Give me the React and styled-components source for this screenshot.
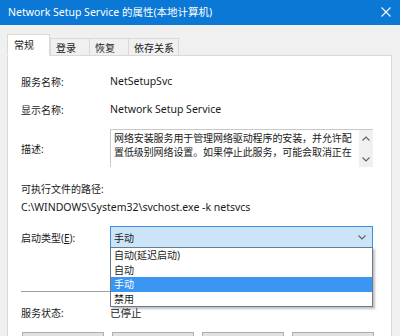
import React from 'react'
import styled, { createGlobalStyle } from 'styled-components'

const GlobalStyle = createGlobalStyle`
  html, body {
    margin: 0;
    padding: 0;
    background: #f0f0f0;
  }
  body {
    font-family: "Noto Sans", "Noto Sans CJK SC", sans-serif;
    font-size: 10px;
    color: #1a1a1a;
  }
`

const tabs = ['常规', '登录', '恢复', '依存关系']
const options = ['自动(延迟启动)', '自动', '手动', '禁用']

function Chevron({ up }) {
  return (
    <svg width="8" height="5" viewBox="0 0 8 5">
      <polyline
        points={up ? '0.5,4.5 4,1 7.5,4.5' : '0.5,0.5 4,4 7.5,0.5'}
        fill="none"
        stroke="#606060"
        strokeWidth="1.1"
      />
    </svg>
  )
}

export default function App() {
  return (
    <Window>
      <GlobalStyle />
      <TitleBar>
        <Title>Network Setup Service 的属性(本地计算机)</Title>
        <CloseIcon viewBox="0 0 10 10">
          <line x1="0.5" y1="0.5" x2="9.5" y2="9.5" stroke="#fff" strokeWidth="1.1" />
          <line x1="9.5" y1="0.5" x2="0.5" y2="9.5" stroke="#fff" strokeWidth="1.1" />
        </CloseIcon>
      </TitleBar>
      <Body>
        <TabStrip>
          {tabs.map((t, i) => (
            <Tab key={t} active={i === 0}>{t}</Tab>
          ))}
        </TabStrip>
        <Panel>
          <Row>
            <Label>服务名称:</Label>
            <Value>NetSetupSvc</Value>
          </Row>
          <Row gap={14}>
            <Label>显示名称:</Label>
            <Value>Network Setup Service</Value>
          </Row>
          <DescRow>
            <Label>描述:</Label>
            <DescBox>
              <DescText>
                网络安装服务用于管理网络驱动程序的安装，并允许配置低级别网络设置。如果停止此服务，可能会取消正在
              </DescText>
              <ScrollBar>
                <Chevron up />
                <Chevron />
              </ScrollBar>
            </DescBox>
          </DescRow>
          <PathLabel>可执行文件的路径:</PathLabel>
          <PathValue>C:\WINDOWS\System32\svchost.exe -k netsvcs</PathValue>
          <StartRow>
            <Label>启动类型(<u>E</u>):</Label>
            <ComboWrap>
              <Combo>
                <span>手动</span>
                <Chevron />
              </Combo>
              <DropList>
                {options.map((o) => (
                  <Option key={o} selected={o === '手动'}>{o}</Option>
                ))}
              </DropList>
            </ComboWrap>
          </StartRow>
          <Separator />
          <Row gap={13}>
            <Label>服务状态:</Label>
            <Value>已停止</Value>
          </Row>
          <Buttons>
            <Button />
            <Button />
            <Button />
            <Button />
          </Buttons>
        </Panel>
      </Body>
    </Window>
  )
}

const Window = styled.div`
  width: 400px;
  height: 336px;
  overflow: hidden;
  display: flex;
  flex-direction: column;
  background: #f0f0f0;
`

const TitleBar = styled.div`
  height: 25px;
  flex-shrink: 0;
  background: #0a78d4;
  display: flex;
  align-items: center;
  justify-content: space-between;
  padding: 0 9px 2px 8px;
  box-sizing: border-box;
`

const Title = styled.div`
  color: #fff;
  font-size: 10.5px;
  white-space: nowrap;
`

const CloseIcon = styled.svg`
  width: 10px;
  height: 10px;
`

const Body = styled.div`
  flex: 1;
  padding: 9px 8px 0 7px;
  display: flex;
  flex-direction: column;
`

const TabStrip = styled.div`
  display: flex;
  align-items: flex-end;
  height: 22px;
  position: relative;
  z-index: 1;
  margin-bottom: -1px;
`

const Tab = styled.div`
  box-sizing: border-box;
  height: ${(p) => (p.active ? '22px' : '18px')};
  min-width: ${(p) => (p.active ? '43px' : '40px')};
  padding: ${(p) => (p.active ? '0 6px 1px 6px' : '0 4px 0 5px')};
  margin-right: ${(p) => (p.active ? '0' : '-1px')};
  background: ${(p) => (p.active ? '#fff' : '#f0f0f0')};
  border: 1px solid #d9d9d9;
  border-bottom: ${(p) => (p.active ? '1px solid #fff' : '1px solid #d9d9d9')};
  font-size: 10px;
  display: flex;
  align-items: center;
`

const Panel = styled.div`
  flex: 1;
  background: #fff;
  border: 1px solid #d9d9d9;
  border-bottom: none;
  padding: 18px 18px 0 13px;
  display: flex;
  flex-direction: column;
`

const Row = styled.div`
  display: flex;
  align-items: center;
  height: 14px;
  margin-top: ${(p) => p.gap || 0}px;
`

const Label = styled.div`
  width: 89px;
  flex-shrink: 0;
  white-space: nowrap;
  u {
    text-decoration: underline;
  }
`

const Value = styled.div`
  white-space: nowrap;
  font-size: 10.5px;
`

const DescRow = styled.div`
  display: flex;
  align-items: center;
  margin-top: 13px;
`

const DescBox = styled.div`
  flex: 1;
  height: 38px;
  box-sizing: border-box;
  border: 1px solid #c8c8c8;
  border-right: none;
  border-bottom: none;
  display: flex;
`

const DescText = styled.div`
  flex: 1;
  padding: 2px 0 0 3px;
  line-height: 13.5px;
  letter-spacing: -0.1px;
`

const ScrollBar = styled.div`
  width: 14px;
  background: #f0f0f0;
  display: flex;
  flex-direction: column;
  justify-content: space-between;
  align-items: center;
  padding: 6px 0 5px;
  box-sizing: border-box;
`

const PathLabel = styled.div`
  margin-top: 15px;
  line-height: 14px;
`

const PathValue = styled.div`
  margin-top: 4px;
  line-height: 14px;
  font-size: 10.5px;
  white-space: nowrap;
`

const StartRow = styled.div`
  display: flex;
  align-items: center;
  margin-top: 12px;
`

const ComboWrap = styled.div`
  flex: 1;
  position: relative;
`

const Combo = styled.div`
  height: 22px;
  box-sizing: border-box;
  background: #cce4f7;
  border: 1px solid #3d8ee0;
  display: flex;
  align-items: center;
  justify-content: space-between;
  padding: 0 6px 0 3px;
`

const DropList = styled.div`
  position: absolute;
  left: 0;
  right: 0;
  top: 21px;
  background: #fff;
  border: 1px solid #6a7b8c;
  box-shadow: 2px 2px 2px rgba(0, 0, 0, 0.25);
  z-index: 2;
`

const Option = styled.div`
  height: 14.5px;
  line-height: 14.5px;
  padding-left: 3px;
  background: ${(p) => (p.selected ? '#3b95f2' : 'transparent')};
  color: ${(p) => (p.selected ? '#fff' : '#1a1a1a')};
`

const Separator = styled.div`
  height: 1px;
  background: #a0a0a0;
  margin-top: 43px;
`

const Buttons = styled.div`
  display: grid;
  grid-template-columns: repeat(4, 82px);
  column-gap: 8px;
  margin-top: 13px;
  padding-left: 1px;
`

const Button = styled.div`
  height: 24px;
  background: #e1e1e1;
  border: 1px solid #adadad;
  box-sizing: border-box;
`
